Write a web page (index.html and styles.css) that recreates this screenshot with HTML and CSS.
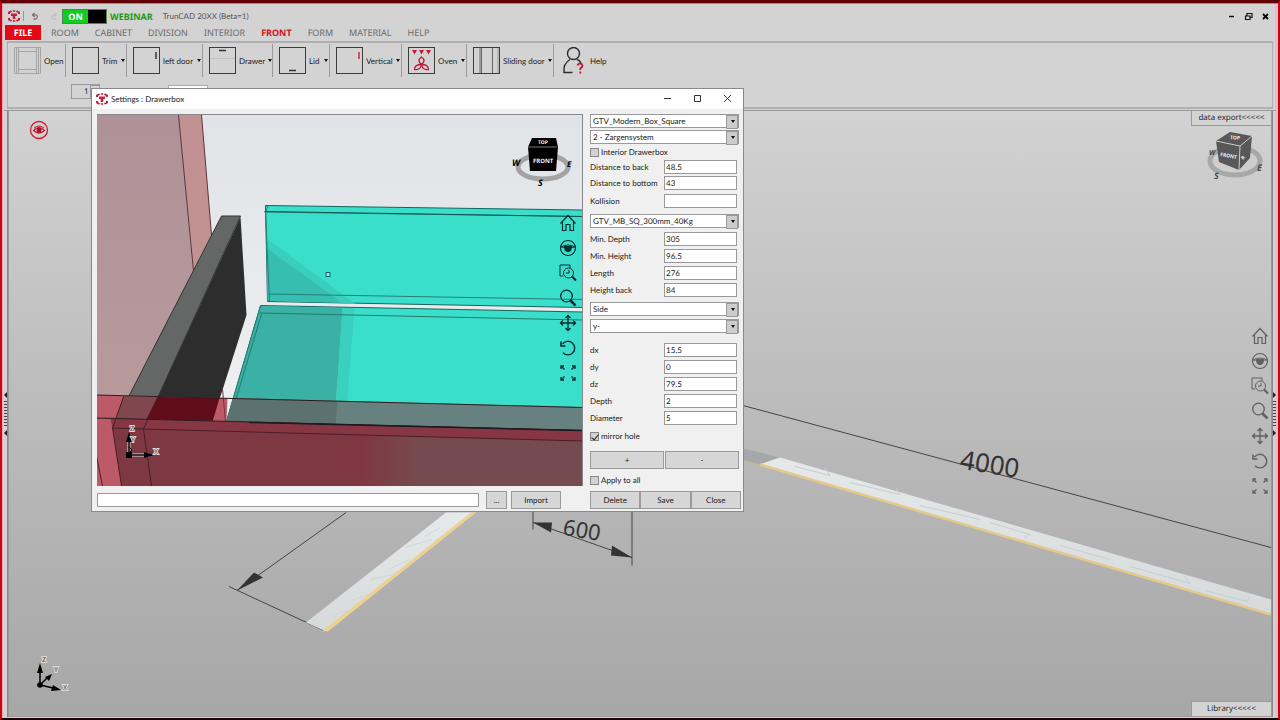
FILE: index.html
```html
<!DOCTYPE html>
<html lang="en">
<head>
<meta charset="utf-8">
<title>TrunCAD 20XX (Beta=1)</title>
<link rel="stylesheet" href="styles.css">
</head>
<body>
<svg class="defs" width="0" height="0" aria-hidden="true">
  <defs>
    <symbol id="logo" viewBox="0 0 12 12"><g fill="none" stroke="currentColor" stroke-width="2"><path d="M1 4V2.500L3.500 1M8.500 1L11 2.500V4M11 8v1.500L8.500 11M3.500 11L1 9.500V8"/><path d="M4.800 1h2.400M4.800 11h2.400" stroke-width="1.500"/></g><path d="M3 3.500h6v2.500H7.300v3H4.700V6H3z" fill="currentColor"/></symbol>
    <symbol id="home" viewBox="0 0 18 18"><path d="M1.500 9.500L9 1.500l7.500 8M3.500 8v8.500H7v-6h4v6h3.500V8" fill="none" stroke="currentColor" stroke-width="1.200"/></symbol>
    <symbol id="look" viewBox="0 0 18 18"><circle cx="9" cy="9" r="7.500" fill="none" stroke="currentColor" stroke-width="1.200"/><path d="M2 8q7-4 14 0q-7 1-14 0z" fill="none" stroke="currentColor"/><path d="M5 7h8q0 6-4 6T5 7z" fill="currentColor"/></symbol>
    <symbol id="zoomwin" viewBox="0 0 18 18"><g fill="none" stroke="currentColor"><path d="M4 12H1V1h10v3"/><circle cx="9.500" cy="9" r="5"/><path d="M10 6v3H7"/></g><path d="M13 12.500l4 4" stroke="currentColor" stroke-width="2.200"/></symbol>
    <symbol id="zoom" viewBox="0 0 18 18"><circle cx="7.500" cy="7" r="5.800" fill="none" stroke="currentColor" stroke-width="1.300"/><path d="M11.500 11.500l5 5" stroke="currentColor" stroke-width="2.500"/></symbol>
    <symbol id="pan" viewBox="0 0 18 18"><path d="M9 1.500v15M1.500 9h15M6.500 4L9 1.500 11.500 4M6.500 14L9 16.500l2.500-2.500M4 6.500L1.500 9 4 11.500M14 6.500L16.500 9 14 11.500" fill="none" stroke="currentColor" stroke-width="1.300"/></symbol>
    <symbol id="rotate" viewBox="0 0 18 18"><path d="M3.500 5A6.800 6.800 0 1 1 4 13.800" fill="none" stroke="currentColor" stroke-width="1.400"/><path d="M2 2.500v4.500h4.500" fill="none" stroke="currentColor" stroke-width="1.600"/></symbol>
    <symbol id="fit" viewBox="0 0 18 18"><g fill="none" stroke="currentColor" stroke-width="1.300"><path d="M5.500 5.500l-3-3M12.500 5.500l3-3M5.500 12.500l-3 3M12.500 12.500l3 3"/><path d="M2 5V2h3M16 5V2h-3M2 13v3h3M16 13v3h-3"/></g></symbol>
    <symbol id="box" viewBox="0 0 27 27"><rect x=".5" y=".5" width="26" height="26" fill="none" stroke="#3c3c3c"/></symbol>
    <linearGradient id="counter" x1="0" y1="0" x2="0" y2="1"><stop offset="0" stop-color="#e6e9ea"/><stop offset="1" stop-color="#d6dadb"/></linearGradient>
    <linearGradient id="haze" x1="0" y1="0" x2="0" y2="1"><stop offset="0" stop-color="#e0e3e7"/><stop offset="1" stop-color="#f2f2f2"/></linearGradient>
    <linearGradient id="wall" x1="0" y1="0" x2="0" y2="1"><stop offset="0" stop-color="#ad9297"/><stop offset="1" stop-color="#b89a9c"/></linearGradient>
    <linearGradient id="front" x1="97" x2="583" y1="0" y2="0" gradientUnits="userSpaceOnUse"><stop offset="0" stop-color="#7d3842"/><stop offset=".55" stop-color="#7f3842"/><stop offset=".66" stop-color="#754a4e"/><stop offset="1" stop-color="#754b4f"/></linearGradient>
  </defs>
</svg>

<div class="app">
  <header class="titlebar">
    <svg class="logo"><use href="#logo"/></svg>
    <span class="rule"></span>
    <button class="quick" aria-label="Undo"><svg viewBox="0 0 9 9"><path d="M2 3h3.500a2.300 2.300 0 1 1-3 3.500M3.500 1L1.500 3l2 2" fill="none" stroke="#765" stroke-width="1.100"/></svg></button>
    <button class="quick redo" aria-label="Redo"><svg viewBox="0 0 9 9"><path d="M7 3H4a2.300 2.300 0 1 0 3 3.500M5.500 1l2 2-2 2" fill="none" stroke="#b8b8b8"/></svg></button>
    <button class="switch"><span>ON</span></button>
    <strong class="webinar">WEBINAR</strong>
    <span class="apptitle">TrunCAD 20XX (Beta=1)</span>
    <div class="winbtns">
      <button aria-label="Minimize"><svg viewBox="0 0 9 9"><path d="M2 4.500h5" stroke="#111" stroke-width="1.500"/></svg></button>
      <button aria-label="Restore"><svg viewBox="0 0 9 9"><path d="M1.500 4h4.500v3.500H1.500zM3 3.500V1.500h5V5.500H6.500" fill="none" stroke="#111" stroke-width="1.200"/></svg></button>
      <button aria-label="Close"><svg viewBox="0 0 9 9"><path d="M2 2l5 5M7 2L2 7" stroke="#000" stroke-width="1.800"/></svg></button>
    </div>
  </header>
  <nav class="tabs">
    <button class="file">FILE</button><button>ROOM</button><button>CABINET</button><button>DIVISION</button><button>INTERIOR</button><button class="active">FRONT</button><button>FORM</button><button>MATERIAL</button><button>HELP</button>
  </nav>
  <section class="ribbon">
    <div class="groups">
      <button class="group w-open"><svg class="ico" viewBox="0 0 27 27"><path d="M.5.5h26v26H.5zM4.500 .5v26M22.500 .5v26M4.500 4.500h18M4.500 22.500h18M2.500 .5v26M24.500 .5v26" fill="none" stroke="#a4a4a4"/></svg>Open</button>
      <button class="group w-trim"><svg class="ico"><use href="#box"/></svg>Trim<i class="caret"></i></button>
      <button class="group w-door"><svg class="ico"><use href="#box"/><path d="M23 5v7" stroke="#333" stroke-width="1.500"/></svg>left door<i class="caret"></i></button>
      <button class="group w-drawer"><svg class="ico"><use href="#box"/><path d="M1 11.500h25" stroke="#c2c2c2"/><path d="M10 3.500h7" stroke="#333" stroke-width="1.500"/></svg>Drawer<i class="caret"></i></button>
      <button class="group w-lid"><svg class="ico"><use href="#box"/><path d="M10 23.500h7" stroke="#333" stroke-width="1.500"/></svg>Lid<i class="caret"></i></button>
      <button class="group w-vert"><svg class="ico"><use href="#box"/><path d="M23 5v7" stroke="#c8283c" stroke-width="1.500"/></svg>Vertical<i class="caret"></i></button>
      <button class="group w-oven"><svg class="ico"><use href="#box"/><path d="M4 3h5L6.500 7.500zM11 3h5l-2.500 4.500zM18 3h5l-2.500 4.500z" fill="#c41a36"/><g fill="none" stroke="#c41a36" stroke-width="1.300"><path d="M13.500 17.500q-5-4 0-7.500q5 3.500 0 7.500z"/><path d="M13.500 17.500q-1 6-7 5q0-5 7-5z"/><path d="M13.500 17.500q1 6 7 5q0-5-7-5z"/></g></svg>Oven<i class="caret"></i></button>
      <button class="group w-slide"><svg class="ico"><use href="#box"/><path d="M8.500 1v25M19.500 1v25M7 1v25" fill="none" stroke="#666"/><path d="M25 1v25" stroke="#999"/></svg>Sliding door<i class="caret"></i></button>
      <button class="group w-help"><svg class="ico" viewBox="0 0 27 27"><g fill="none" stroke="#2c2c2c" stroke-width="1.400"><circle cx="13.500" cy="6.500" r="6"/><path d="M12.500 25.500H4q-1-9 6-13M17 12.500q3 1 4 3.500"/></g><path d="M17.500 18.500q.500-2 2.500-2t2.500 2q0 1.500-2.200 3v1.500M20.300 24.500v2" fill="none" stroke="#c81430" stroke-width="1.800"/></svg>Help</button>
    </div>
    <div class="options"><div class="spin"><input value="1" aria-label="Count"><button aria-label="Step"></button></div><input class="value" aria-label="Value"></div>
  </section>

  <main class="work">
    <div class="gutter left"><i></i></div>
    <div class="stage">
      <svg class="scene" viewBox="9 110 1262 606" preserveAspectRatio="xMidYMid slice" role="img" aria-label="Room view">
        <g stroke="#454545" fill="none"><path d="M346 512L237 590M229 586L326 631M533 505v24M632 505v60M533 522L632 557M743 405L1271 547"/></g>
        <g fill="#333"><path d="M237 590l17-18 9 5zM533 522l19 0-1 10zM632 557l-21-2 1-10z"/></g>
        <path d="M306 622L446 512H475L326 631z" fill="url(#counter)"/>
        <path d="M322 631h6L476 512h-5z" fill="#ecd190"/>
        <path d="M352 600l18-7M370 579l24-5M390 568l20-9M405 547l27-8M425 536l15-9M335 614l17-5" stroke="#d2d6d8" fill="none"/>
        <path d="M743 448L780 457 760 464 743 460z" fill="#a4a8a9"/><path d="M743 460l17 4 18-6" fill="none" stroke="#c5b990"/>
        <path d="M780 457L1271 599V613L760 464z" fill="url(#counter)"/>
        <path d="M760 464L1271 614" stroke="#e5c98a" stroke-width="2.500"/>
        <path d="M795 466l35 9-5-8M850 482l50 12-4-7M920 505l60 14M990 522l40 12-6 3M1060 545l50 14M1130 566l60 17-6-8M1205 590l42 11 3-5" fill="none" stroke="#c7ccce"/>
        <text class="dim" x="562" y="534" font-size="22" transform="rotate(10 562 534)">600</text>
        <text class="dim" x="959" y="468" font-size="26" transform="rotate(9 959 468)">4000</text>
      </svg>
      <svg class="eye" viewBox="0 0 20 20" role="img" aria-label="Visible"><circle cx="10" cy="10" r="8.500" fill="none" stroke="#cf1c30" stroke-width="1.300"/><path d="M4.500 10.500q5.500-6 11 0q-5.500 5-11 0z" fill="none" stroke="#b81830" stroke-width="1.200"/><circle cx="10" cy="10" r="2.500" fill="#b01028"/><path d="M5 8q5-4 10 0" fill="none" stroke="#b81830"/></svg>
      <button class="flyout top">data export&lt;&lt;&lt;&lt;&lt;</button>
      <svg class="cube" viewBox="1205 128 60 54" role="img" aria-label="View cube"><ellipse cx="1235" cy="161" rx="25" ry="14" fill="none" stroke="#a8a8a8" stroke-width="5"/><path d="M1216 141l14-9 22 4-2 22-11 12-20-8z" fill="#585858"/><path d="M1216 141l24 5 12-10M1240 146l-1 24" fill="none" stroke="#ccc"/><g class="cubetext small"><text x="1220" y="156" transform="rotate(10 1220 156)">FRONT</text><text x="1230" y="139" transform="rotate(5 1230 139)">TOP</text><text x="1243" y="160" transform="rotate(-45 1243 160)">R</text></g><g class="compass"><text x="1214" y="179">S</text><text x="1257" y="171">E</text><text x="1209" y="155" font-size="7">W</text></g></svg>
      <div class="tools main-tools">
        <button aria-label="Home"><svg><use href="#home"/></svg></button><button aria-label="Look"><svg><use href="#look"/></svg></button><button aria-label="Zoom window"><svg><use href="#zoomwin"/></svg></button><button aria-label="Zoom"><svg><use href="#zoom"/></svg></button><button aria-label="Pan"><svg><use href="#pan"/></svg></button><button aria-label="Rotate"><svg><use href="#rotate"/></svg></button><button aria-label="Fit"><svg><use href="#fit"/></svg></button>
      </div>
      <svg class="axes" viewBox="30 652 44 44" role="img" aria-label="Axes"><circle cx="40" cy="685" r="2.800"/><path d="M40 685v-14M40 685l13 3M40 685l8-8" stroke="#000" stroke-width="1.500"/><path d="M40 663l3 10h-6zM61 690l-10 1 2-6zM52 674l-3 7-4-4z"/><g class="axislabel"><text x="42" y="662">Z</text><text x="54" y="672">Y</text><text x="63" y="690">X</text></g></svg>
      <button class="flyout bottom">Library&lt;&lt;&lt;&lt;&lt;</button>
    </div>
    <div class="gutter right"><i></i></div>
  </main>

  <form class="dialog" role="dialog" aria-labelledby="dlg-title">
    <header class="dlg-title">
      <svg class="logo"><use href="#logo"/></svg><span id="dlg-title">Settings : Drawerbox</span>
      <div class="dlg-btns">
        <button type="button" aria-label="Minimize"><svg viewBox="0 0 9 9"><path d="M1 4.500h7" stroke="#333"/></svg></button>
        <button type="button" aria-label="Maximize"><svg viewBox="0 0 9 9"><path d="M1.500 1.500h6v6h-6z" fill="none" stroke="#333"/></svg></button>
        <button type="button" aria-label="Close window"><svg viewBox="0 0 9 9"><path d="M1 1l7 7M8 1L1 8" stroke="#333"/></svg></button>
      </div>
    </header>
    <div class="dlg-body">
      <div class="preview">
        <div class="model">
          <svg viewBox="97 114 486 371" preserveAspectRatio="xMidYMid slice" role="img" aria-label="Drawer box model">
            <path d="M97 114h486v371H97z" fill="url(#haze)"/>
            <path d="M97 114h82l15 156 10 10L150 396H97z" fill="url(#wall)"/>
            <path d="M179 114h23l10 120-18 37z" fill="#c29293"/>
            <path d="M179 114l15 156M202 114l10 120" stroke="#5c343b" fill="none"/>
            <path d="M222 215h19L158 397 144 428 113 427z" fill="#656767" stroke="#333"/>
            <path d="M241 216l6 98-34 106H148l10-23z" fill="#2d2d2e"/>
            <path d="M266 204.500L583 209v97.500L268 300.500z" fill="#39dfcb" stroke="#12665f"/>
            <path d="M267 244l78 58-77-2z" fill="#38beb0"/><path d="M268 238l88 65h-12l-77-56z" fill="#39cfbf"/>
            <path d="M265 211l318 4.500M269 204l-3 7 4 89M269 293l314 5.500" fill="none" stroke="#247f77"/>
            <path d="M265 210.500l318 5" fill="none" stroke="#17544f"/>
            <path d="M261 304.500L583 311v119l-356-9z" fill="#39dfcb" stroke="#12665f"/>
            <path d="M261 305l82 2-8 115-108-1z" fill="#3bb1a5"/><path d="M343 307h12l-9 115h-11z" fill="#3ad0be"/>
            <path d="M260 312l323 7M262 313l-32 107M261 305l-34 115" fill="none" stroke="#25796f"/>
            <path d="M97 394l130 3-7 24-123-4z" fill="#bc5a67"/>
            <path d="M124 395l34 1-14 31-31-1z" fill="#80474f"/>
            <path d="M158 396l64 1-9 24-66-3z" fill="#5f0d19"/>
            <path d="M220 397h8l-1 24h-14z" fill="#bc5a67"/><path d="M223 388l3 33" stroke="#6c3940"/>
            <path d="M234 397l349 9v24l-356-9z" fill="#66817f"/><path d="M234 397l104 3-2 24-109-3z" fill="#5c7170"/>
            <path d="M97 417l486 13v55H97z" fill="url(#front)"/>
            <path d="M97 417l486 12v11L113 427l-16-4z" fill="#873744"/>
            <path d="M97 417l14 1 2 9 9 58H97z" fill="#bc5a67"/>
            <path d="M97 394l486 12.500M97 417l116 3 370 9.500" stroke="#2e1c22" fill="none"/><path d="M250 421.500l333 8" stroke="#1d191c" stroke-width="1.500"/>
            <path d="M113 427l31 1 439 12M113 427l9 58M144 428l8 57M97 455l6 30M124 396l-11 31M158 397l-14 31" fill="none" stroke="#4b1d28"/>
            <path d="M326.500 271.500h4v4h-4z" fill="#8ee" stroke="#185a68"/>
          </svg>
          <svg class="dlg-cube" viewBox="510 132 66 56" role="img" aria-label="View cube"><ellipse cx="543" cy="167" rx="25" ry="12" fill="none" stroke="#a3a3a3" stroke-width="5"/><path d="M532 138h24l2 9-2 24h-26l-2-24z" fill="#000"/><path d="M528 147h29" stroke="#777"/><g class="cubetext"><text x="533" y="163">FRONT</text><text x="538" y="144" font-size="5">TOP</text></g><g class="compass dark"><text x="512" y="166">W</text><text x="538" y="186">S</text><text x="567" y="167" font-size="8">E</text></g></svg>
          <svg class="dlg-axes" viewBox="122 420 40 40" role="img" aria-label="Axes"><path d="M129 454v-15M129 454h20" stroke="#ddd" stroke-width="3"/><path d="M129 454v-15M129 454h20" stroke="#000" stroke-width="1.500"/><path d="M126 451h6v6h-6zM129 431l3 10h-6zM154 454l-10 3v-6z"/><path d="M129 446l3 3-3 3" fill="none" stroke="#000"/><g class="axislabel"><text x="130" y="430">Z</text><text x="131" y="441">Y</text><text x="154" y="453">X</text></g></svg>
          <div class="tools">
            <button type="button" aria-label="Home"><svg><use href="#home"/></svg></button><button type="button" aria-label="Look"><svg><use href="#look"/></svg></button><button type="button" aria-label="Zoom window"><svg><use href="#zoomwin"/></svg></button><button type="button" aria-label="Zoom"><svg><use href="#zoom"/></svg></button><button type="button" aria-label="Pan"><svg><use href="#pan"/></svg></button><button type="button" aria-label="Rotate"><svg><use href="#rotate"/></svg></button><button type="button" aria-label="Fit"><svg><use href="#fit"/></svg></button>
          </div>
        </div>
        <div class="import"><input class="path" aria-label="File path"><button type="button" class="btn dots">...</button><button type="button" class="btn wide">Import</button></div>
      </div>
      <div class="props">
        <div class="combos tight">
          <div class="combo"><select aria-label="System"><option>GTV_Modern_Box_Square</option></select></div>
          <div class="combo"><select aria-label="Type"><option>2 - Zargensystem</option></select></div>
        </div>
        <label class="check"><input type="checkbox">Interior Drawerbox</label>
        <div class="fields tight">
          <label for="dback">Distance to back</label><input id="dback" value="48.5">
          <label for="dbot">Distance to bottom</label><input id="dbot" value="43">
        </div>
        <div class="fields single"><label for="kol">Kollision</label><input id="kol"></div>
        <div class="combos model-pick"><div class="combo"><select aria-label="Model"><option>GTV_MB_SQ_300mm_40Kg</option></select></div></div>
        <div class="fields sizes">
          <label for="mind">Min. Depth</label><input id="mind" value="305">
          <label for="minh">Min. Height</label><input id="minh" value="96.5">
          <label for="len">Length</label><input id="len" value="276">
          <label for="hb">Height back</label><input id="hb" value="84">
        </div>
        <div class="combos place">
          <div class="combo"><select aria-label="Part"><option>Side</option></select></div>
          <div class="combo"><select aria-label="Direction"><option>y-</option></select></div>
        </div>
        <div class="fields holes">
          <label for="dx">dx</label><input id="dx" value="15.5">
          <label for="dy">dy</label><input id="dy" value="0">
          <label for="dz">dz</label><input id="dz" value="79.5">
          <label for="dep">Depth</label><input id="dep" value="2">
          <label for="dia">Diameter</label><input id="dia" value="5">
        </div>
        <label class="check mirror"><input type="checkbox" checked>mirror hole</label>
        <div class="pair"><button type="button" class="btn">+</button><button type="button" class="btn">-</button></div>
        <label class="check"><input type="checkbox">Apply to all</label>
        <div class="actions"><button type="button" class="btn">Delete</button><button type="button" class="btn">Save</button><button type="button" class="btn">Close</button></div>
      </div>
    </div>
  </form>
</div>
</body>
</html>
```

FILE: styles.css
```css
* { box-sizing: border-box; }
html, body { height: 100%; }
body { margin: 0; font: 8px/12px "Noto Sans", sans-serif; color: #222; background: #d3d3d3; text-rendering: geometricPrecision; }
button, input, select { font: inherit; color: inherit; margin: 0; padding: 0; border: 0; border-radius: 0; text-rendering: inherit; }
button { background: none; }
svg { display: block; }
.defs { position: absolute; }

.app { position: relative; display: flex; flex-direction: column; min-height: 100%; padding: 1px 0 0 1px; border: solid #c4061a; border-width: 3px 2px 2px; border-top-color: #620008; border-bottom-color: #1c0306; box-shadow: inset 0 1px #e06c74, inset 1px 0 #eba9ad, inset -3px 0 #eebcc0; }

.titlebar { display: flex; align-items: center; height: 21px; padding: 3px 8px 0 5px; }
.logo { width: 12px; height: 12px; color: #c2203c; }
.rule { width: 1px; height: 10px; margin: 0 7px 0 3px; background: #999; }
.quick { width: 9px; height: 9px; margin-right: 9px; }
.quick.redo { margin-right: 4px; }
.quick svg { width: 9px; height: 9px; }
.switch { width: 45px; height: 15px; border: 1px solid #4a8a4a; background: #000; display: flex; }
.switch span { width: 25px; background: #12cc22; color: #fff; font: bold 9px/13px "Noto Sans", sans-serif; }
.webinar { margin: 2px 0 0 3px; font-size: 9px; color: #189a20; }
.apptitle { margin-left: 10px; color: #555; font-family: Lato, sans-serif; }
.winbtns { display: flex; gap: 8px; margin-left: auto; }
.winbtns button, .winbtns svg { width: 9px; height: 9px; }

.tabs { display: flex; gap: 16px; padding-left: 2px; height: 15px; margin-bottom: 1px; }
.tabs button { font-size: 9px; line-height: 15px; color: #6b6b6b; }
.tabs .file { width: 36px; margin-right: -6px; background: #e20a14; color: #fff; font-weight: bold; }
.tabs .active { color: #d8101c; font-weight: bold; }

.ribbon { height: 68px; margin: 0 5px 0 4px; border: 2px solid #b0b0b0; border-width: 2px 1px; }
.groups { display: flex; height: 36px; padding-top: 1px; }
.group { display: flex; align-items: center; gap: 3px; padding-left: 6px; height: 33px; border-right: 1px solid #999; white-space: nowrap; font: 8px/12px Lato, sans-serif; }
.ico { width: 27px; height: 27px; flex: none; }
.caret { margin: 0 1px 0 auto; border: solid transparent; border-width: 3px 2px 0; border-top-color: #111; }
.w-open { width: 58px; }
.w-trim { width: 61px; } .w-door { width: 76px; } .w-drawer { width: 70px; } .w-lid { width: 57px; }
.w-vert { width: 72px; } .w-oven { width: 65px; } .w-slide { width: 87px; } .w-help { border: 0; }
.options { display: flex; align-items: center; gap: 68px; padding: 5px 0 0 63px; }
.spin { display: flex; width: 29px; height: 15px; border: 1px solid #999; }
.spin input { flex: 1; min-width: 0; padding-left: 12px; background: #d3d3d3; }
.spin button { width: 9px; border: solid #999; border-width: 1px 0 0 1px; }
.value { width: 40px; height: 14px; background: #fff; border: 1px solid #aaa; }

.work { flex: 1; display: flex; min-height: 400px; margin: 1px 2px 1px 1px; }
.gutter { display: flex; align-items: center; width: 4px; border-top: 1px solid #999; }
.gutter i { position: relative; width: 3px; height: 26px; background: repeating-linear-gradient(#444 0 1px, transparent 1px 3px); }
.gutter i::before, .gutter i::after { content: ""; position: absolute; left: 0; top: -9px; border: solid transparent; border-width: 3px 3px 3px 0; border-right-color: #222; }
.gutter i::after { top: 29px; }
.right i::before, .right i::after { border-width: 3px 0 3px 3px; border-left-color: #222; }
.left { border-right: 1px solid #888; }
.right { border-left: 1px solid #888; }
.stage { position: relative; flex: 1; overflow: hidden; border: 1px solid #999; background: linear-gradient(#d2d2d2, #bdbdbd 45%, #afafaf 80%, #a7a7a7); }
.scene { position: absolute; inset: 0; width: 100%; height: 100%; }
.dim { font-family: "Noto Sans", sans-serif; fill: #333; }
.eye { position: absolute; left: 20px; top: 9px; width: 20px; height: 20px; }
.flyout { position: absolute; right: 0; width: 80px; height: 15px; background: #d3d3d3; border: 1px solid #999; font: 8px/12px "Open Sans", sans-serif; }
.flyout.top { top: 0; border-width: 0 0 1px 1px; }
.flyout.bottom { bottom: 0; border-width: 1px 0 0 1px; }
.cube { position: absolute; right: 6px; top: 17px; width: 60px; height: 54px; }
.cubetext { font: bold 6px "Noto Sans", sans-serif; fill: #eee; }
.cubetext.small { font-size: 5px; }
.compass { font: bold italic 9px "Noto Sans", sans-serif; fill: #4c4c4c; }
.compass.dark { fill: #000; }
.axes { position: absolute; left: 21px; bottom: 20px; width: 44px; height: 44px; }
.axislabel { font: 7px "Noto Sans", sans-serif; fill: #444; stroke: #ddd; stroke-width: 2px; paint-order: stroke; }
.tools { position: absolute; display: flex; flex-direction: column; gap: 7px; right: 5px; top: 99px; color: #0c2b30; }
.tools button, .tools svg { width: 18px; height: 18px; }
.main-tools { right: 2px; top: 216px; color: #606060; }

.dialog { position: absolute; left: 89px; top: 85px; width: 653px; background: #f0f0f0; border: 1px solid #8a8a8a; font: 8px/12px Lato, sans-serif; }
.dlg-title { display: flex; align-items: center; gap: 3px; height: 20px; padding: 0 11px 1px 4px; background: #fff; }
.dlg-btns { display: flex; gap: 21px; margin-left: auto; }
.dlg-btns button, .dlg-btns svg { width: 9px; height: 9px; }
.dlg-body { display: flex; gap: 7px; padding: 5px 2px 2px 5px; }
.preview { flex: 1; display: flex; flex-direction: column; }
.model { position: relative; flex: 1; border: 1px solid #888; border-width: 1px 1px 0 0; overflow: hidden; }
.model > svg:first-child { position: absolute; width: 100%; height: 100%; }
.dlg-cube { position: absolute; right: 6px; top: 17px; width: 66px; height: 56px; }
.dlg-axes { position: absolute; left: 25px; bottom: 25px; width: 40px; height: 40px; }
.import { display: flex; align-items: center; margin-top: 5px; padding-right: 22px; height: 18px; }
.path { flex: 1; height: 14px; margin-right: 7px; background: #fff; border: 1px solid #999; }
.btn { height: 18px; background: #d6d6d6; border: 1px solid #9a9a9a; }
.dots { width: 21px; margin-right: 4px; }
.wide { width: 50px; }

.props { width: 151px; display: flex; flex-direction: column; white-space: nowrap; }
.combos { display: grid; gap: 3px; width: 149px; }
.combos.tight, .fields.tight { row-gap: 2px; }
.combo { position: relative; }
.combo select { display: block; width: 100%; height: 14px; padding: 0 12px 0 2px; appearance: none; background: #fff; border: 1px solid #999; line-height: 12px; }
.combo::before { content: ""; position: absolute; right: 1px; top: 1px; width: 10px; height: 12px; background: #ccc; border: 1px solid #999; pointer-events: none; }
.combo::after { content: ""; position: absolute; right: 4px; top: 6px; border: solid transparent; border-width: 3px 2px 0; border-top-color: #111; pointer-events: none; }
.fields { display: grid; grid-template-columns: 74px 73px; row-gap: 3px; align-items: center; }
.fields input { width: 100%; height: 14px; padding: 0 1px; background: #fff; border: 1px solid #999; }
.fields label { line-height: 14px; }
.single { margin-top: 4px; }
.model-pick { margin-top: 6px; }
.sizes { margin-top: 4px; }
.place { margin-top: 5px; }
.holes { margin-top: 10px; }
.check { display: flex; align-items: center; gap: 2px; height: 16px; }
.check input { position: relative; appearance: none; width: 9px; height: 9px; background: #d2d2d2; border: 1px solid #888; }
.check input:checked::before { content: ""; position: absolute; left: 2px; top: 0; width: 3px; height: 6px; border: solid #222; border-width: 0 1px 1px 0; transform: rotate(40deg); }
.mirror { margin: 3px 0 7px; }
.pair { display: grid; grid-template-columns: 1fr 1fr; gap: 1px; width: 149px; margin-bottom: 3px; }
.actions { display: flex; margin-top: 3px; }
.actions .btn { flex: 1; }
```
